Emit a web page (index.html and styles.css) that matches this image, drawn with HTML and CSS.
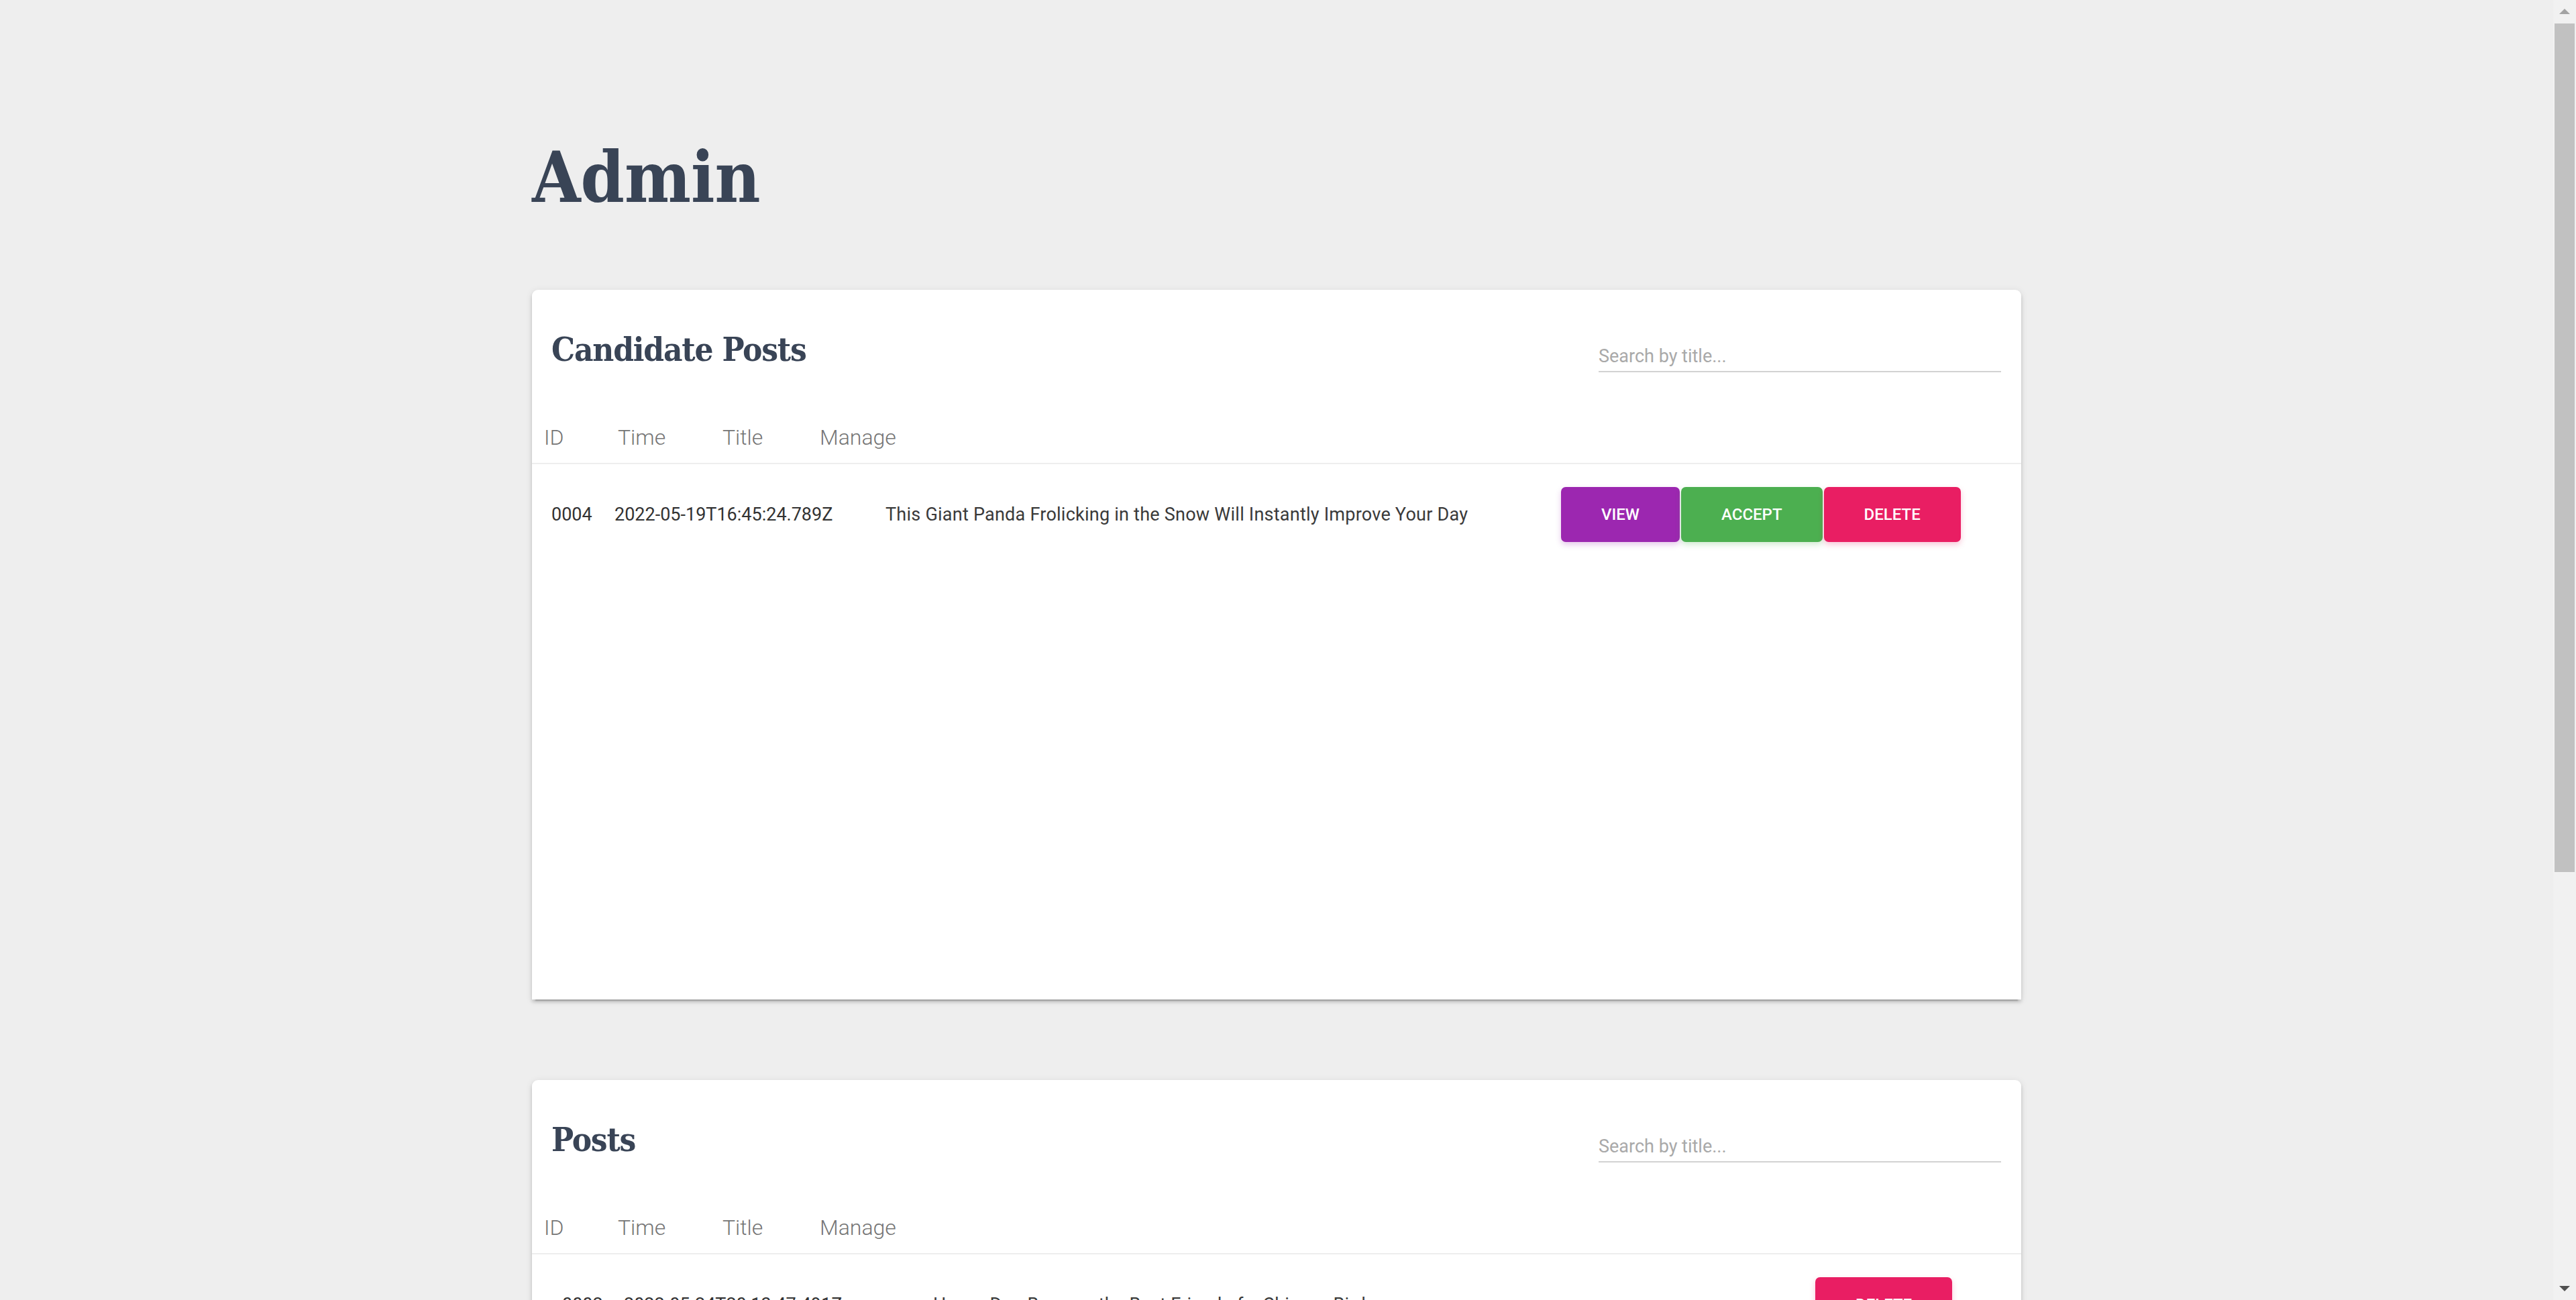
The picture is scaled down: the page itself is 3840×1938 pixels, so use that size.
FILE: index.html
```html
<!DOCTYPE html>
<html lang="en">
<head>
<meta charset="utf-8">
<title>Admin</title>
<link rel="stylesheet" href="styles.css">
</head>
<body>
<div class="window">
  <div class="page">
    <main class="container">
      <h1 class="page-title">Admin</h1>

      <section class="card">
        <div class="card-head">
          <h2 class="card-title">Candidate Posts</h2>
          <input class="search" type="text" placeholder="Search by title...">
        </div>
        <div class="thead"><span>ID</span><span>Time</span><span>Title</span><span>Manage</span></div>
        <div class="tbody">
          <div class="row row-candidate">
            <span>0004</span>
            <span>2022-05-19T16:45:24.789Z</span>
            <span class="cell-title">This Giant Panda Frolicking in the Snow Will Instantly Improve Your Day</span>
            <div class="actions">
              <button class="btn btn-view">View</button>
              <button class="btn btn-accept">Accept</button>
              <button class="btn btn-delete">Delete</button>
            </div>
          </div>
        </div>
      </section>

      <section class="card">
        <div class="card-head">
          <h2 class="card-title">Posts</h2>
          <input class="search" type="text" placeholder="Search by title...">
        </div>
        <div class="thead"><span>ID</span><span>Time</span><span>Title</span><span>Manage</span></div>
        <div class="tbody tbody-scroll">
          <div class="row row-post">
            <span>0002</span>
            <span>2022-05-24T20:13:47.491Z</span>
            <span class="cell-title">How a Dog Became the Best Friend of a Chinese Bird</span>
            <div class="actions"><button class="btn btn-delete">Delete</button></div>
          </div>
          <div class="row row-post">
            <span>0001</span>
            <span>2022-05-18T09:12:05.114Z</span>
            <span class="cell-title">Scientists Discover a New Species of Frog in the Andes</span>
            <div class="actions"><button class="btn btn-delete">Delete</button></div>
          </div>
          <div class="row row-post">
            <span>0003</span>
            <span>2022-05-17T11:02:33.502Z</span>
            <span class="cell-title">The Secret Life of Otters Revealed by Hidden Cameras</span>
            <div class="actions"><button class="btn btn-delete">Delete</button></div>
          </div>
          <div class="row row-post">
            <span>0005</span>
            <span>2022-05-16T08:40:19.027Z</span>
            <span class="cell-title">Ten Photos of Cats That Will Make You Smile</span>
            <div class="actions"><button class="btn btn-delete">Delete</button></div>
          </div>
          <div class="row row-post">
            <span>0006</span>
            <span>2022-05-15T14:21:58.660Z</span>
            <span class="cell-title">Why Elephants Never Forget, According to Science</span>
            <div class="actions"><button class="btn btn-delete">Delete</button></div>
          </div>
          <div class="row row-post">
            <span>0007</span>
            <span>2022-05-14T17:55:41.318Z</span>
            <span class="cell-title">A Baby Koala Takes Its First Steps</span>
            <div class="actions"><button class="btn btn-delete">Delete</button></div>
          </div>
        </div>
      </section>
    </main>
  </div>
  <div class="scrollbar">
    <div class="sb-arrow">
      <svg width="16" height="8" viewBox="0 0 16 8"><polygon points="0,8 16,8 8,0" fill="#a3a3a3"/></svg>
    </div>
    <div class="sb-thumb"></div>
    <div class="sb-spacer"></div>
    <div class="sb-arrow">
      <svg width="16" height="8" viewBox="0 0 16 8"><polygon points="0,0 16,0 8,8" fill="#505050"/></svg>
    </div>
  </div>
</div>
</body>
</html>
```

FILE: styles.css
```css
html, body {
  margin: 0;
  padding: 0;
  height: 100%;
  overflow: hidden;
  background: #eeeeee;
}

.window {
  display: flex;
  height: 1938px;
}

.page {
  flex: 1;
  height: 1938px;
  overflow: hidden;
  padding-top: 213px;
  box-sizing: border-box;
}

.container {
  width: 2220px;
  margin: 0 auto;
}

.page-title {
  margin: 0 0 115px;
  font-family: "DejaVu Serif Condensed", "DejaVu Serif", serif;
  font-stretch: condensed;
  font-weight: bold;
  font-size: 104px;
  line-height: 104px;
  color: #394456;
}

.card {
  background: #ffffff;
  border-radius: 9px 9px 0 0;
  box-shadow: 0 7px 2px -5px rgba(0, 0, 0, 0.2),
              0 4px 5px 0 rgba(0, 0, 0, 0.14),
              0 2px 11px 0 rgba(0, 0, 0, 0.1);
  margin-bottom: 120px;
}

.card-head {
  display: flex;
  justify-content: space-between;
  align-items: flex-start;
  padding: 59px 30px 0 29px;
}

.card-title {
  margin: 0;
  font-family: "DejaVu Serif Condensed", "DejaVu Serif", serif;
  font-stretch: condensed;
  font-weight: bold;
  font-size: 49px;
  letter-spacing: -1.2px;
  line-height: 60px;
  color: #394456;
}

.search {
  margin-top: 23px;
  width: 600px;
  border: 0;
  border-bottom: 2px solid #d2d2d2;
  padding: 0 0 5px;
  font-family: Roboto, "Liberation Sans", sans-serif;
  font-weight: 400;
  font-size: 27px;
  line-height: 34px;
  height: 41px;
  box-sizing: border-box;
  color: #333333;
  background: transparent;
  outline: none;
}

.search::placeholder {
  color: #a9a9a9;
  opacity: 1;
}

.thead {
  display: grid;
  grid-template-columns: 110px 156px 145px auto;
  margin-top: 77px;
  padding: 0 0 18px 18px;
  border-bottom: 2px solid #eeeeee;
  font-family: Roboto, "Liberation Sans", sans-serif;
  font-weight: 300;
  font-size: 32px;
  line-height: 40px;
  color: #757575;
}

.tbody {
  height: 798px;
  overflow-y: auto;
}

.tbody::-webkit-scrollbar {
  width: 16px;
}

.tbody::-webkit-scrollbar-track {
  background: #fcfcfc;
}

.tbody::-webkit-scrollbar-thumb {
  background: #787878;
  border-radius: 8px;
}

.row {
  display: grid;
  align-items: center;
  padding: 34px 0;
  font-family: Roboto, "Liberation Sans", sans-serif;
  font-weight: 400;
  font-size: 27px;
  line-height: 32px;
  color: #333333;
}

.cell-title {
  letter-spacing: 0.24px;
  color: #3a3a3a;
}

.row-candidate {
  grid-template-columns: 94px 404px 1007px auto;
  padding-left: 29px;
}

.row-post {
  grid-template-columns: 92px 461px 1315px auto;
  padding-left: 45px;
}

.actions {
  display: flex;
  gap: 2px;
}

.btn {
  height: 82px;
  padding: 0 60px;
  border: 0;
  border-radius: 7px;
  font-family: Roboto, "Liberation Sans", sans-serif;
  font-weight: 500;
  font-size: 24px;
  letter-spacing: 0;
  text-transform: uppercase;
  color: #ffffff;
  cursor: pointer;
}

.btn-view {
  background: #9c27b0;
  box-shadow: 0 4px 9px rgba(156, 39, 176, 0.25);
}

.btn-accept {
  background: #4caf50;
  box-shadow: 0 4px 9px rgba(76, 175, 80, 0.25);
}

.btn-delete {
  background: #e91e63;
  box-shadow: 0 4px 9px rgba(233, 30, 99, 0.25);
}

.scrollbar {
  width: 34px;
  height: 1938px;
  background: #f1f1f1;
  display: flex;
  flex-direction: column;
}

.sb-arrow {
  height: 34px;
  display: flex;
  align-items: center;
  justify-content: center;
  flex: none;
}

.sb-thumb {
  margin: 1px 2px 0;
  height: 1265px;
  background: #c1c1c1;
  flex: none;
}

.sb-spacer {
  flex: 1;
}
```
